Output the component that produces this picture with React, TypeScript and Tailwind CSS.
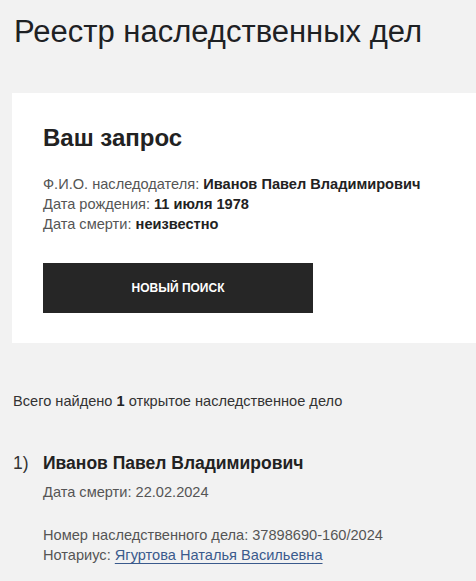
export default function App() {
  return (
    <div
      className="min-h-[581px] w-[476px] overflow-hidden bg-[#f2f2f2] text-[#222]"
      style={{ fontFamily: '"Liberation Sans", Arial, sans-serif' }}
    >
      <h1 className="px-[14px] pt-[14px] text-[31px] leading-[36px] font-normal whitespace-nowrap text-[#1e2124]">
        Реестр наследственных дел
      </h1>

      <section className="ml-3 mt-[43px] bg-white pl-[31px] pt-[31px] pb-[30px]">
        <h2 className="text-[24px] leading-[28px] font-semibold text-[#222]">Ваш запрос</h2>
        <div className="mt-[22px] text-[14.6px] leading-[20px] text-[#555]">
          <p>
            Ф.И.О. наследодателя: <b className="text-[#222]">Иванов Павел Владимирович</b>
          </p>
          <p>
            Дата рождения: <b className="text-[#222]">11 июля 1978</b>
          </p>
          <p>
            Дата смерти: <b className="text-[#222]">неизвестно</b>
          </p>
        </div>
        <button className="mt-[29px] flex h-[50px] w-[270px] items-center justify-center bg-[#262626] text-[12px] font-bold text-white">
          НОВЫЙ ПОИСК
        </button>
      </section>

      <p className="mt-[48px] px-[13px] text-[14.6px] leading-[20px] text-[#333]">
        Всего найдено <b className="text-[#222]">1</b> открытое наследственное дело
      </p>

      <div className="mt-[40px] flex px-[13px]">
        <span className="w-[30px] text-[17.5px] leading-[24px] text-[#333]">1)</span>
        <div>
          <h3 className="text-[17.5px] leading-[24px] font-bold text-[#222]">Иванов Павел Владимирович</h3>
          <p className="mt-[7px] text-[14.6px] leading-[20px] text-[#555]">Дата смерти: 22.02.2024</p>
          <div className="mt-[23px] text-[14.6px] leading-[20px] text-[#555]">
            <p>Номер наследственного дела: 37898690-160/2024</p>
            <p>
              Нотариус:{" "}
              <a href="#" className="text-[#3a5a8c] underline decoration-[#3a5a8c] underline-offset-[3px]">
                Ягуртова Наталья Васильевна
              </a>
            </p>
          </div>
        </div>
      </div>
    </div>
  );
}
